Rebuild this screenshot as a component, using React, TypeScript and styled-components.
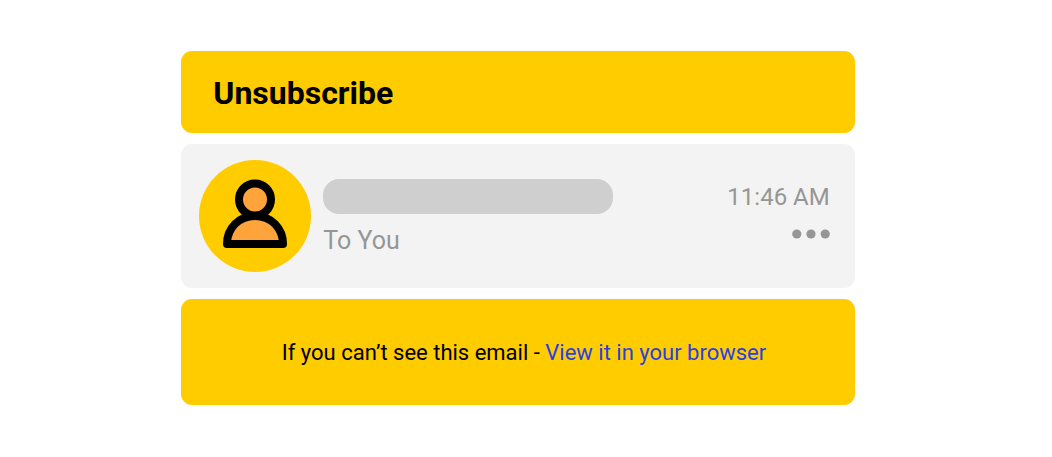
import React from "react";
import styled, { createGlobalStyle } from "styled-components";

const GlobalStyle = createGlobalStyle`
  *, *::before, *::after { box-sizing: border-box; }
  body {
    margin: 0;
    background: #fff;
    color: #000;
    font-family: Roboto, "Liberation Sans", sans-serif;
  }
`;

const Page = styled.div`
  padding: 51px 16px 52px 0;
`;

const Email = styled.main`
  width: 65%;
  margin: 0 auto;
  display: grid;
  gap: 11px;
`;

const Panel = styled.section<{ $tone: "brand" | "muted" }>`
  border-radius: 11px;
  background: ${({ $tone }) => ($tone === "brand" ? "#ffcc00" : "#f3f3f3")};
`;

const SubjectPanel = styled(Panel)`
  padding: 23px 32px 21px;
`;

const Subject = styled.h1`
  margin: 0;
  font-size: 32px;
  line-height: 38px;
  font-weight: 700;
`;

const SenderPanel = styled(Panel)`
  display: flex;
  gap: 12px;
  padding: 16px 25px 16px 18px;
`;

const Avatar = styled.svg`
  flex: none;
  width: 112px;
  height: 112px;
`;

const SenderDetails = styled.div`
  flex: 1;
  padding-top: 19px;
`;

const NamePlaceholder = styled.div`
  width: 290px;
  max-width: 100%;
  height: 35px;
  border-radius: 16px;
  background: #cfcfcf;
`;

const Recipient = styled.p`
  margin: 9px 0 0;
  color: #969696;
  font-size: 25px;
  line-height: 36px;
`;

const Meta = styled.div`
  display: flex;
  flex-direction: column;
  align-items: flex-end;
  padding-top: 19px;
`;

const SentTime = styled.time`
  color: #969696;
  font-size: 24px;
  line-height: 36px;
`;

const MoreButton = styled.button`
  display: flex;
  margin-top: 14px;
  padding: 0;
  border: 0;
  background: none;
  color: #969696;
  cursor: pointer;
`;

const Notice = styled(Panel)`
  padding: 38px 24px 36px 36px;
  text-align: center;
  font-size: 22px;
  line-height: 32px;
`;

const NoticeText = styled.p`
  margin: 0;
`;

const BrowserLink = styled.a`
  color: #2b3fe0;
  text-decoration: none;
`;

export default function App() {
  return (
    <>
      <GlobalStyle />
      <Page>
        <Email>
          <SubjectPanel $tone="brand">
            <Subject>Unsubscribe</Subject>
          </SubjectPanel>
          <SenderPanel $tone="muted">
            <Avatar viewBox="0 0 112 112" aria-hidden="true">
              <circle cx="56" cy="56" r="56" fill="#ffcc00" />
              <g fill="#ffa43a" stroke="#000" strokeWidth="8" strokeLinejoin="round">
                <circle cx="56" cy="39.5" r="16" />
                <path d="M28 84C28 68 40 56 56 56S84 68 84 84Z" />
              </g>
            </Avatar>
            <SenderDetails>
              <NamePlaceholder />
              <Recipient>To You</Recipient>
            </SenderDetails>
            <Meta>
              <SentTime>11:46 AM</SentTime>
              <MoreButton type="button" aria-label="More options">
                <svg width="38" height="10" viewBox="0 0 38 10" fill="currentColor" aria-hidden="true">
                  <circle cx="4.8" cy="5" r="4.6" />
                  <circle cx="19" cy="5" r="4.6" />
                  <circle cx="33.2" cy="5" r="4.6" />
                </svg>
              </MoreButton>
            </Meta>
          </SenderPanel>
          <Notice $tone="brand">
            <NoticeText>
              If you can’t see this email - <BrowserLink href="#browser">View it in your browser</BrowserLink>
            </NoticeText>
          </Notice>
        </Email>
      </Page>
    </>
  );
}
